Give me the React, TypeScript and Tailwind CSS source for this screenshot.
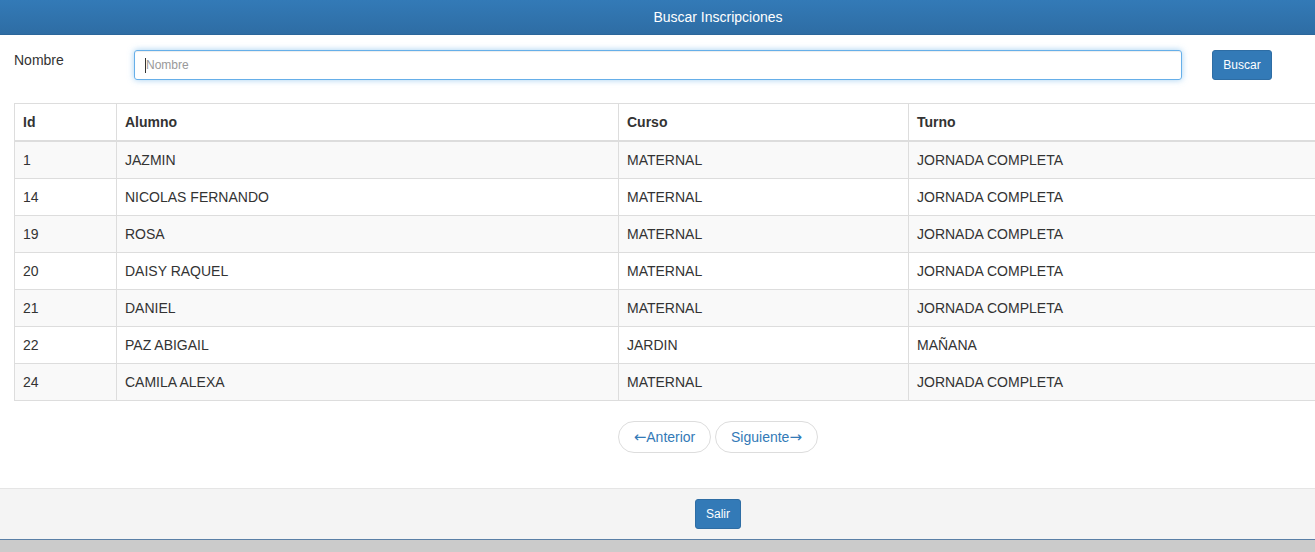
import React from "react";

const rows = [
  ["1", "JAZMIN", "MATERNAL", "JORNADA COMPLETA"],
  ["14", "NICOLAS FERNANDO", "MATERNAL", "JORNADA COMPLETA"],
  ["19", "ROSA", "MATERNAL", "JORNADA COMPLETA"],
  ["20", "DAISY RAQUEL", "MATERNAL", "JORNADA COMPLETA"],
  ["21", "DANIEL", "MATERNAL", "JORNADA COMPLETA"],
  ["22", "PAZ ABIGAIL", "JARDIN", "MAÑANA"],
  ["24", "CAMILA ALEXA", "MATERNAL", "JORNADA COMPLETA"],
];

export default function App() {
  return (
    <div
      className="w-[1315px] h-[552px] overflow-hidden bg-white text-[#333] text-[14px] leading-[20px]"
      style={{ fontFamily: '"Liberation Sans", Arial, sans-serif' }}
    >
      <div className="w-[1436px]">
        <div className="h-[35px] bg-gradient-to-b from-[#337ab7] to-[#2e6da4] border-b border-[#2b669a] flex items-center justify-center text-white text-[14px]">
          Buscar Inscripciones
        </div>
        <div className="flex items-start pt-[15px] pl-[14px]">
          <div className="w-[120px] pt-0">Nombre</div>
          <div className="w-[1048px] h-[30px] border border-[#66afe9] rounded-[3px] shadow-[inset_0_1px_1px_rgba(0,0,0,0.075),0_0_6px_rgba(102,175,233,0.6)] flex items-center pl-[10px] text-[12px] text-[#999]">
            <span className="w-px h-[15px] bg-[#333]"></span>
            Nombre
          </div>
          <div className="ml-[30px] w-[60px] h-[30px] bg-[#337ab7] border border-[#2e6da4] rounded-[3px] text-white text-[12px] flex items-center justify-center">
            Buscar
          </div>
        </div>
        <div className="px-[14px] mt-[23px]">
          <table className="w-full border-collapse border border-[#ddd] table-fixed">
            <colgroup>
              <col className="w-[102px]" />
              <col className="w-[502px]" />
              <col className="w-[290px]" />
              <col />
            </colgroup>
            <thead>
              <tr>
                <th className="text-left font-bold px-[8px] py-[8px] border border-[#ddd] border-b-2">Id</th>
                <th className="text-left font-bold px-[8px] py-[8px] border border-[#ddd] border-b-2">Alumno</th>
                <th className="text-left font-bold px-[8px] py-[8px] border border-[#ddd] border-b-2">Curso</th>
                <th className="text-left font-bold px-[8px] py-[8px] border border-[#ddd] border-b-2">Turno</th>
              </tr>
            </thead>
            <tbody>
              {rows.map((r, i) => (
                <tr key={i} className={i % 2 === 0 ? "bg-[#f9f9f9]" : "bg-white"}>
                  {r.map((c, j) => (
                    <td key={j} className="px-[8px] py-[8px] border border-[#ddd]">
                      {c}
                    </td>
                  ))}
                </tr>
              ))}
            </tbody>
          </table>
        </div>
        <div className="flex justify-center gap-[4px] mt-[20px]">
          <div className="w-[93px] h-[32px] border border-[#ddd] rounded-full flex items-center justify-center text-[#337ab7]">
            <span style={{ fontFamily: '"DejaVu Sans", sans-serif' }} className="text-[15px]">←</span>Anterior
          </div>
          <div className="w-[103px] h-[32px] border border-[#ddd] rounded-full flex items-center justify-center text-[#337ab7]">
            Siguiente<span style={{ fontFamily: '"DejaVu Sans", sans-serif' }} className="text-[15px]">→</span>
          </div>
        </div>
        <div className="mt-[35px] border-t border-[#e5e5e5] bg-[#f4f4f4] h-[51px] flex items-center justify-center">
          <div className="w-[46px] h-[30px] bg-[#337ab7] border border-[#2e6da4] rounded-[3px] text-white text-[12px] flex items-center justify-center">
            Salir
          </div>
        </div>
        <div className="border-t border-[#5a7fa6] bg-[#cbcbcb] h-[13px]"></div>
      </div>
    </div>
  );
}
